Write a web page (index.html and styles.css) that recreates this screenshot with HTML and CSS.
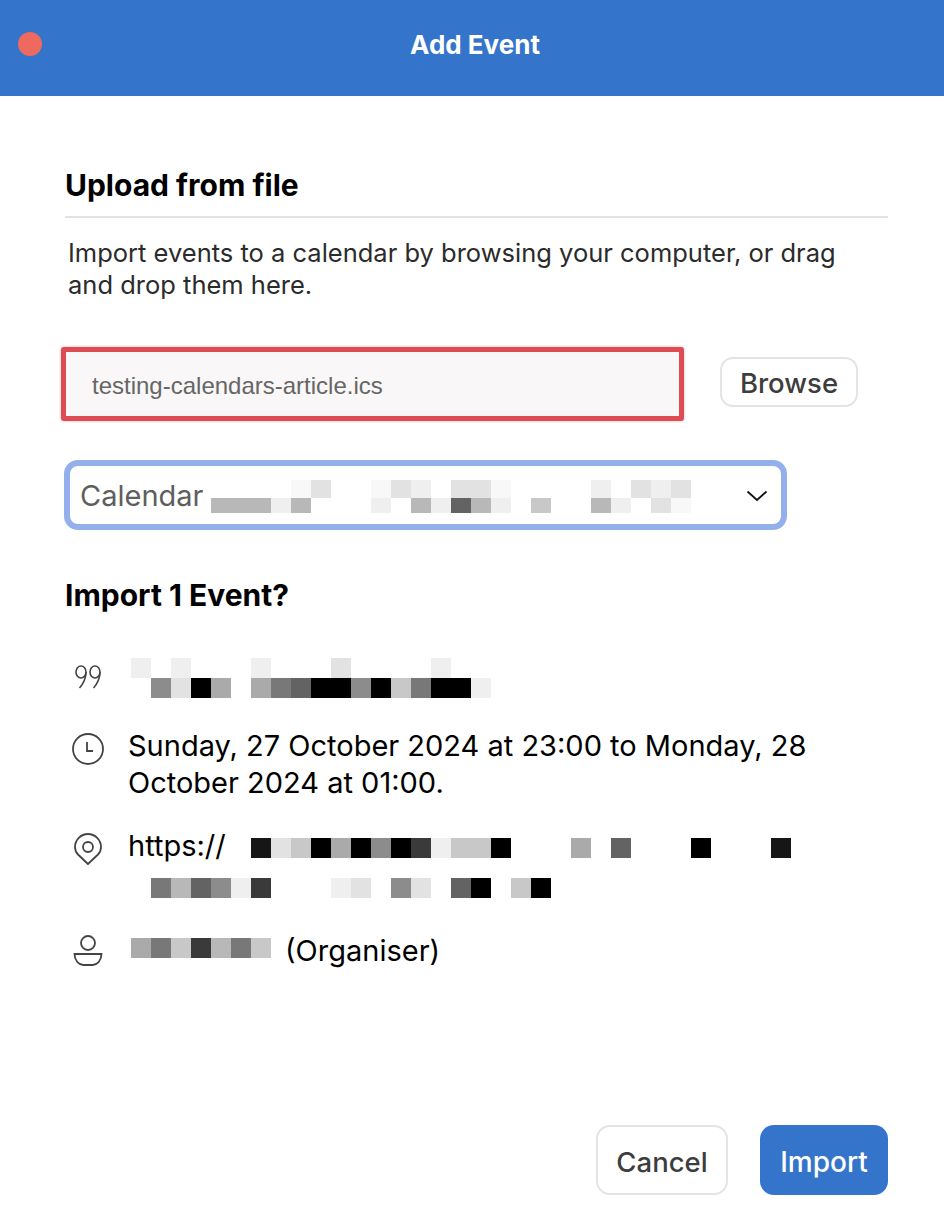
FILE: index.html
```html
<!DOCTYPE html>
<html lang="en">
<head>
    <meta charset="UTF-8">
    <title>Add Event</title>
    <link rel="stylesheet" href="styles.css">
</head>
<body>
    <header class="titlebar">
        <span class="close-dot"></span>
        <h1>Add Event</h1>
    </header>

    <main class="content">
        <h2 class="section-title">Upload from file</h2>
        <p class="intro">Import events to a calendar by browsing your computer, or drag and drop them here.</p>

        <div class="file-row">
            <div class="file-input">testing-calendars-article.ics</div>
            <button class="btn-browse">Browse</button>
        </div>

        <div class="select">
            <span class="select-label">Calendar</span>
            <div class="mosaic mosaic-select">
                <div class="px-row">
                    <i></i><i></i><i></i><i></i><i class="s11"></i><i class="s9"></i><i></i><i></i><i class="s11"></i><i class="s9"></i><i class="s10"></i><i></i><i class="s9"></i><i class="s9"></i><i class="s11"></i><i></i><i></i><i></i><i></i><i class="s10"></i><i></i><i class="s9"></i><i class="s10"></i><i class="s9"></i>
                </div>
                <div class="px-row px-short">
                    <i class="s7"></i><i class="s7"></i><i class="s7"></i><i class="s10"></i><i class="s7"></i><i></i><i></i><i></i><i class="s10"></i><i></i><i class="s7"></i><i class="s10"></i><i class="s3"></i><i class="s7"></i><i class="s10"></i><i></i><i class="s8"></i><i></i><i></i><i class="s7"></i><i class="s10"></i><i></i><i class="s9"></i><i class="s11"></i>
                </div>
            </div>
            <svg class="chevron" width="22" height="12" viewBox="0 0 22 12"><path d="M1.5 1.5 11 10l9.5-8.5" fill="none" stroke="#111" stroke-width="1.8"/></svg>
        </div>

        <h3 class="import-title">Import 1 Event?</h3>

        <div class="detail detail-quote">
            <svg class="icon" width="34" height="34" viewBox="0 0 34 34"><g fill="none" stroke="#444" stroke-width="1.6"><ellipse cx="10" cy="11" rx="5" ry="6"/><path d="M15 11c0 6-3 12-6.500 16"/><ellipse cx="24" cy="11" rx="5" ry="6"/><path d="M29 11c0 6-3 12-6.500 16"/></g></svg>
            <div class="mosaic mosaic-quote">
                <div class="px-row">
                    <i class="s10"></i><i></i><i class="s10"></i><i></i><i></i><i></i><i class="s10"></i><i></i><i></i><i></i><i class="s9"></i><i></i><i></i><i></i><i></i><i class="s10"></i>
                </div>
                <div class="px-row">
                    <i></i><i class="s5"></i><i class="s9"></i><i class="s0"></i><i class="s6"></i><i></i><i class="s6"></i><i class="s4"></i><i class="s3"></i><i class="s0"></i><i class="s0"></i><i class="s5"></i><i class="s0"></i><i class="s8"></i><i class="s4"></i><i class="s0"></i><i class="s0"></i><i class="s10"></i>
                </div>
            </div>
        </div>

        <div class="detail detail-time">
            <svg class="icon" width="34" height="34" viewBox="0 0 34 34"><g fill="none" stroke="#444" stroke-width="1.8"><circle cx="17" cy="17" r="15"/><path d="M16 10v9h6"/></g></svg>
            <p>Sunday, 27 October 2024 at 23:00 to Monday, 28 October 2024 at 01:00.</p>
        </div>

        <div class="detail detail-url">
            <svg class="icon" width="34" height="34" viewBox="0 0 34 34"><g fill="none" stroke="#444" stroke-width="1.8"><path d="M17 32 7 22.500C4.500 20 4 17.500 4 15a13 13 0 0 1 26 0c0 2.500-.5 5-3 7.500z"/><circle cx="17" cy="15" r="5"/></g></svg>
            <div class="url-body">
                <div class="url-line">
                    <span class="url-text">https://</span>
                    <div class="px-row">
                        <i class="s1"></i><i class="s9"></i><i class="s8"></i><i class="s0"></i><i class="s6"></i><i class="s0"></i><i class="s5"></i><i class="s0"></i><i class="s2"></i><i class="s10"></i><i class="s8"></i><i class="s8"></i><i class="s0"></i><i></i><i></i><i></i><i class="s6"></i><i></i><i class="s3"></i><i></i><i></i><i></i><i class="s0"></i><i></i><i></i><i></i><i class="s1"></i>
                    </div>
                </div>
                <div class="px-row url-second">
                    <i class="s4"></i><i class="s7"></i><i class="s3"></i><i class="s5"></i><i class="s10"></i><i class="s2"></i><i></i><i></i><i></i><i class="s10"></i><i class="s9"></i><i></i><i class="s5"></i><i class="s9"></i><i></i><i class="s3"></i><i class="s0"></i><i></i><i class="s8"></i><i class="s0"></i>
                </div>
            </div>
        </div>

        <div class="detail detail-organiser">
            <svg class="icon" width="34" height="34" viewBox="0 0 34 34"><g fill="none" stroke="#444" stroke-width="1.8"><circle cx="17" cy="8" r="7"/><path d="M3.500 19h27c0 6-4 11-9 11h-9c-5 0-9-5-9-11z"/></g></svg>
            <div class="px-row organiser-px">
                <i class="s6"></i><i class="s4"></i><i class="s8"></i><i class="s2"></i><i class="s7"></i><i class="s4"></i><i class="s8"></i>
            </div>
            <span class="organiser-text">(Organiser)</span>
        </div>

        <footer class="actions">
            <button class="btn-cancel">Cancel</button>
            <button class="btn-import">Import</button>
        </footer>
    </main>
</body>
</html>
```

FILE: styles.css
```css
* {
    margin: 0;
    padding: 0;
    box-sizing: border-box;
}

html, body {
    height: 1230px;
    overflow: hidden;
}

body {
    font-family: Inter, "Liberation Sans", sans-serif;
    background-color: #fff;
    color: #000;
    display: flex;
    flex-direction: column;
}

.titlebar {
    height: 96px;
    background-color: #3475cb;
    display: flex;
    align-items: center;
    justify-content: center;
    position: relative;
}

.titlebar h1 {
    color: #fff;
    font-size: 26px;
    font-weight: 700;
    margin-bottom: 7px;
    margin-left: 6px;
}

.close-dot {
    position: absolute;
    left: 18px;
    top: 32px;
    width: 24px;
    height: 24px;
    border-radius: 50%;
    background-color: #ee6a5f;
}

.content {
    flex: 1;
    display: flex;
    flex-direction: column;
    padding: 69px 56px 35px 65px;
}

.section-title {
    font-size: 30px;
    font-weight: 700;
    line-height: 40px;
    padding-bottom: 11px;
    border-bottom: 2px solid #e2e2e2;
}

.intro {
    font-size: 25.500px;
    line-height: 32px;
    color: #2b2b2b;
    margin: 19px 0 0 3px;
    width: 790px;
}

.file-row {
    display: flex;
    align-items: center;
    gap: 36px;
    margin: 46px 0 0 -4px;
}

.file-input {
    width: 623px;
    height: 74px;
    border: 5px solid #dd4c53;
    border-radius: 3px;
    background-color: #f9f7f7;
    box-shadow: 0 0 3px rgba(221, 76, 83, 0.4);
    color: #666;
    font-family: "Liberation Sans", Arial, sans-serif;
    font-size: 24px;
    line-height: 68px;
    padding-left: 26px;
}

.btn-browse {
    width: 138px;
    height: 50px;
    margin-bottom: 4px;
    padding-top: 2px;
    border: 2px solid #e4e4e4;
    border-radius: 13px;
    background-color: #fff;
    color: #3d3d3d;
    font-family: inherit;
    font-size: 27.500px;
    font-weight: 500;
}

.select {
    width: 723px;
    height: 70px;
    border: 6px solid #93b0ec;
    border-radius: 14px;
    margin: 39px 0 0 -1px;
    padding-left: 10px;
    display: flex;
    align-items: center;
    position: relative;
}

.select-label {
    font-size: 29px;
    color: #5e5e5e;
}

.chevron {
    position: absolute;
    right: 13px;
    top: 24px;
}

.px-row {
    display: flex;
    height: 20px;
}

.px-row i {
    display: block;
    width: 20px;
    height: 100%;
    flex: none;
}

.s0 { background-color: #000; }
.s1 { background-color: #161616; }
.s2 { background-color: #3a3a3a; }
.s3 { background-color: #636363; }
.s4 { background-color: #787878; }
.s5 { background-color: #8c8c8c; }
.s6 { background-color: #aaa; }
.s7 { background-color: #b8b8b8; }
.s8 { background-color: #c8c8c8; }
.s9 { background-color: #e2e2e2; }
.s10 { background-color: #efefef; }
.s11 { background-color: #f8f8f8; }

.mosaic-select {
    position: absolute;
    left: 141px;
    top: 14px;
}

.mosaic-select .px-row {
    height: 18px;
}

.mosaic-select .px-short {
    height: 15px;
}

.import-title {
    font-size: 30px;
    font-weight: 700;
    line-height: 40px;
    margin-top: 45px;
}

.detail {
    display: flex;
    margin-left: 6px;
    font-size: 29px;
}

.icon {
    flex: none;
    margin-right: 23px;
}

.detail-quote {
    margin-top: 43px;
    height: 40px;
    align-items: center;
}

.mosaic-quote {
    margin-left: 3px;
}

.detail-time {
    margin-top: 29px;
}

.detail-time .icon {
    margin-top: 5px;
}

.detail-time p {
    width: 700px;
    line-height: 37px;
}

.detail-url {
    margin-top: 25px;
}

.detail-url .icon {
    margin-top: 6px;
}

.url-line {
    display: flex;
    align-items: center;
    height: 40px;
}

.url-line .px-row {
    margin-top: 4px;
}

.url-text {
    width: 123px;
    margin-bottom: 2px;
}

.url-second {
    margin: 12px 0 0 23px;
}

.detail-organiser {
    margin-top: 32px;
    height: 40px;
    align-items: center;
}

.detail-organiser .icon {
    margin-top: 3px;
}

.organiser-px {
    margin: -4px 14px 0 3px;
}

.organiser-text {
    font-size: 29px;
}

.actions {
    margin-top: auto;
    display: flex;
    justify-content: flex-end;
    gap: 32px;
}

.actions button {
    height: 70px;
    padding-top: 3px;
    border-radius: 14px;
    font-family: inherit;
    font-weight: 500;
}

.btn-cancel {
    width: 132px;
    border: 2px solid #e4e4e4;
    background-color: #fff;
    color: #3d3d3d;
    font-size: 27.500px;
}

.btn-import {
    width: 128px;
    border: none;
    background-color: #3475cb;
    color: #fff;
    font-size: 28px;
}
```
